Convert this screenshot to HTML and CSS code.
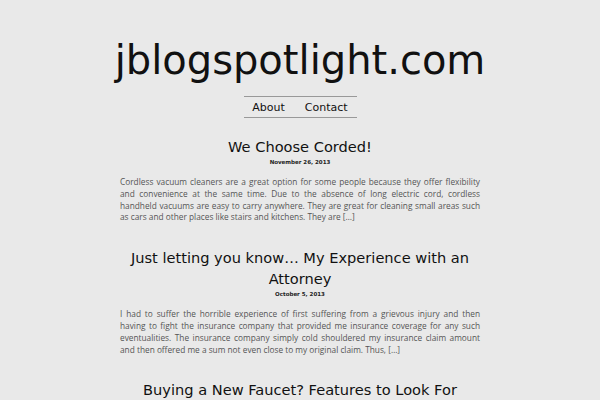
FILE: index.html
```html
<!DOCTYPE html>
<html>
<head>
<meta charset="utf-8">
<link rel="stylesheet" href="styles.css">
</head>
<body>
<header class="site-header">
  <h1 class="site-title">jblogspotlight.com</h1>
  <nav class="nav">
    <a href="#">About</a>
    <a href="#">Contact</a>
  </nav>
</header>
<main class="content">
  <article class="post">
    <h2 class="post-title">We Choose Corded!</h2>
    <div class="post-date">November 26, 2013</div>
    <p class="post-excerpt">Cordless vacuum cleaners are a great option for some people because they offer flexibility and convenience at the same time. Due to the absence of long electric cord, cordless handheld vacuums are easy to carry anywhere. They are great for cleaning small areas such as cars and other places like stairs and kitchens. They are […]</p>
  </article>
  <article class="post">
    <h2 class="post-title">Just letting you know… My Experience with an Attorney</h2>
    <div class="post-date">October 5, 2013</div>
    <p class="post-excerpt">I had to suffer the horrible experience of first suffering from a grievous injury and then having to fight the insurance company that provided me insurance coverage for any such eventualities. The insurance company simply cold shouldered my insurance claim amount and then offered me a sum not even close to my original claim. Thus, […]</p>
  </article>
  <article class="post">
    <h2 class="post-title">Buying a New Faucet? Features to Look For</h2>
  </article>
</main>
</body>
</html>
```
FILE: styles.css
```css
html, body {
  margin: 0;
  padding: 0;
  background: #e9e9e9;
}
body {
  font-family: "DejaVu Sans", sans-serif;
  color: #111;
}
.site-header {
  display: flex;
  flex-direction: column;
  align-items: center;
  padding-top: 35px;
}
.site-title {
  margin: 0;
  font-weight: normal;
  font-size: 40px;
  line-height: 50px;
  color: #111;
}
.nav {
  margin-top: 11px;
  width: 113px;
  border-top: 1px solid #999;
  border-bottom: 1px solid #999;
  display: flex;
  justify-content: center;
  gap: 20px;
  padding: 3px 0 2px;
}
.nav a {
  font-size: 11px;
  line-height: 15px;
  color: #111;
  text-decoration: none;
}
.content {
  width: 360px;
  margin: 0 auto;
  padding-top: 18px;
}
.post {
  margin-bottom: 24px;
}
.post-title {
  margin: 0;
  font-weight: normal;
  font-size: 14.6px;
  line-height: 21px;
  text-align: center;
  color: #111;
}
.post-date {
  font-family: "DejaVu Sans", sans-serif;
  font-weight: bold;
  font-size: 5.5px;
  line-height: 8px;
  text-align: center;
  color: #222;
  margin-top: 1px;
}
.post-excerpt {
  margin: 10px 0 0;
  font-family: "Open Sans", sans-serif;
  font-size: 8.3px;
  line-height: 11.8px;
  text-align: justify;
  color: #555;
}
```
